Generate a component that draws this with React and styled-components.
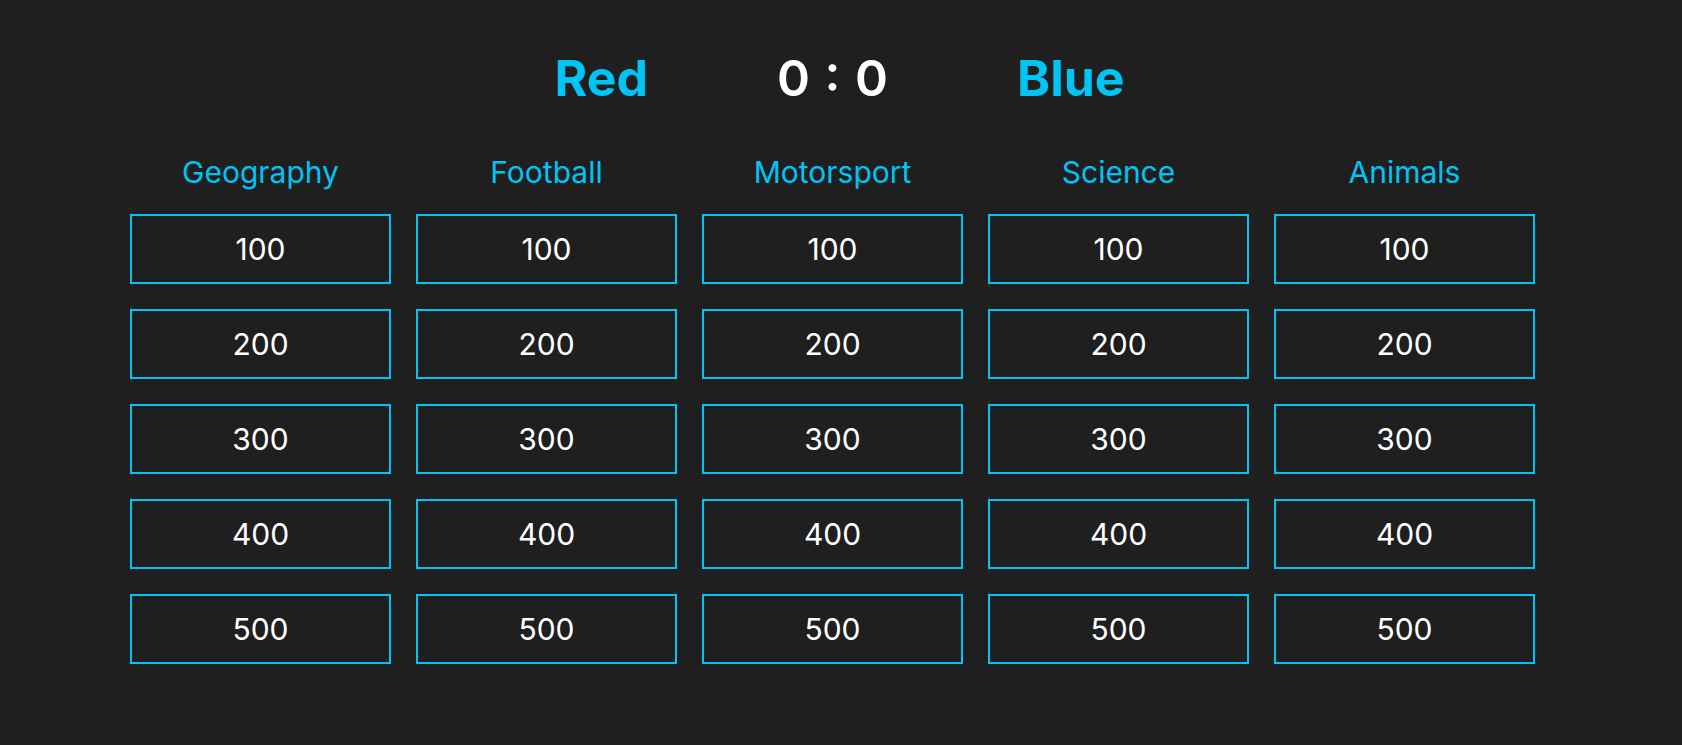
import React from "react";
import styled, { createGlobalStyle } from "styled-components";

const GlobalStyle = createGlobalStyle`
  html, body {
    margin: 0;
    padding: 0;
    background: #1f1f1f;
  }
  body {
    font-family: Inter, "Noto Sans", sans-serif;
    color: #ffffff;
  }
`;

const CYAN = "#00c4f4";

const Page = styled.main`
  min-height: 745px;
  box-sizing: border-box;
  padding: 48px 0 0 130px;
`;

const Board = styled.div`
  width: 1405px;
  display: flex;
  flex-direction: column;
`;

const ScoreBar = styled.header`
  display: flex;
  justify-content: center;
  align-items: center;
  gap: 129px;
  height: 60px;
  padding-left: 14px;
`;

const Team = styled.div`
  font-size: 50px;
  line-height: 60px;
  font-weight: 700;
  color: ${CYAN};
`;

const Score = styled.div`
  font-size: 50px;
  line-height: 60px;
  font-weight: 600;
  color: #ffffff;
  word-spacing: 2px;
`;

const Grid = styled.div`
  margin-top: 47px;
  display: grid;
  grid-template-columns: repeat(5, 1fr);
  column-gap: 25px;
`;

const Column = styled.section`
  display: flex;
  flex-direction: column;
  gap: 25px;
`;

const Category = styled.h2`
  margin: -1px 0 -1px;
  font-size: 30px;
  line-height: 36px;
  font-weight: 400;
  color: ${CYAN};
  text-align: center;
`;

const Tile = styled.button`
  box-sizing: border-box;
  height: 70px;
  width: 100%;
  background: transparent;
  border: 2px solid ${CYAN};
  color: #ffffff;
  font-family: Inter, "Noto Sans", sans-serif;
  font-size: 30px;
  font-weight: 400;
  cursor: pointer;
  padding: 0;
`;

const categories = ["Geography", "Football", "Motorsport", "Science", "Animals"];
const values = [100, 200, 300, 400, 500];

export default function App() {
  return (
    <>
      <GlobalStyle />
      <Page>
        <Board>
          <ScoreBar>
            <Team>Red</Team>
            <Score>0 : 0</Score>
            <Team>Blue</Team>
          </ScoreBar>
          <Grid>
            {categories.map((c) => (
              <Column key={c}>
                <Category>{c}</Category>
                {values.map((v) => (
                  <Tile key={v}>{v}</Tile>
                ))}
              </Column>
            ))}
          </Grid>
        </Board>
      </Page>
    </>
  );
}
